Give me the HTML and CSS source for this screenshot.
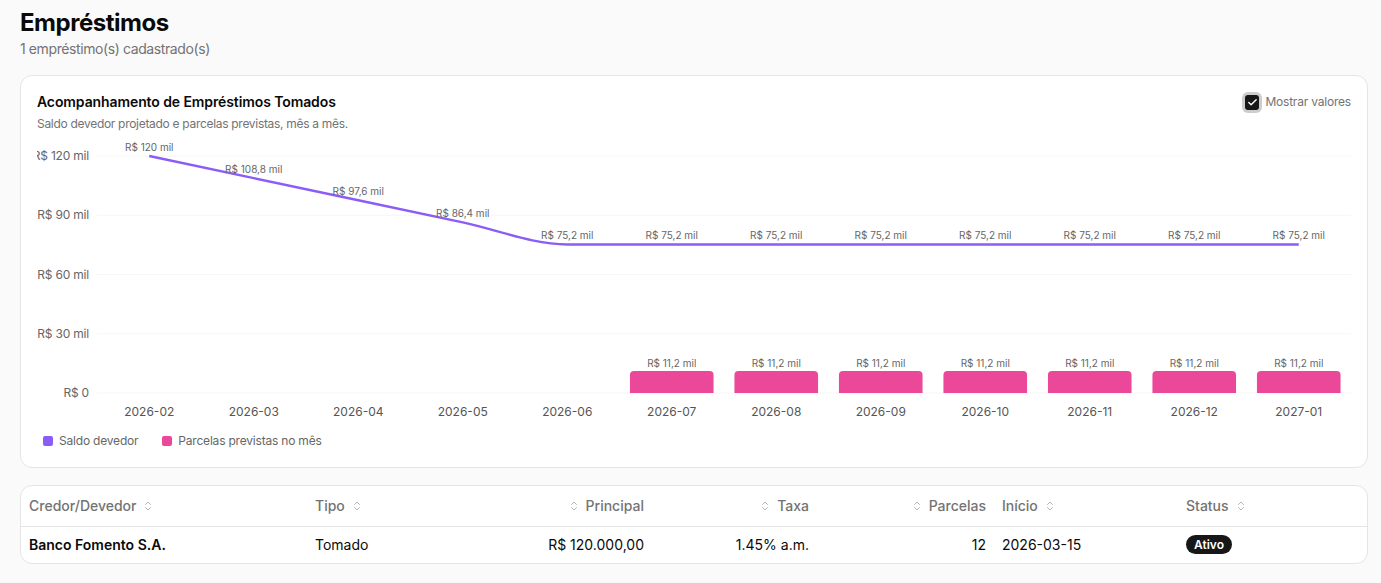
FILE: index.html
```html
<!DOCTYPE html>
<html lang="pt-BR">
<head>
    <meta charset="UTF-8">
    <meta name="viewport" content="width=device-width, initial-scale=1.0">
    <title>Empréstimos</title>
    <link rel="stylesheet" href="styles.css">
</head>
<body>
<main class="page">
    <h1>Empréstimos</h1>
    <p class="lead">1 empréstimo(s) cadastrado(s)</p>

    <section class="card chart-card">
        <div class="card-head">
            <div>
                <h2>Acompanhamento de Empréstimos Tomados</h2>
                <p class="card-sub">Saldo devedor projetado e parcelas previstas, mês a mês.</p>
            </div>
            <label class="toggle">
                <span class="box">
                    <svg viewBox="0 0 24 24" width="11" height="11"><path d="M20 6 9 17l-5-5" fill="none" stroke="#fff" stroke-width="3" stroke-linecap="round" stroke-linejoin="round"/></svg>
                </span>
                Mostrar valores
            </label>
        </div>

        <svg class="chart" width="1314" height="290" viewBox="0 0 1314 290">
            <!-- grade horizontal -->
            <g class="grid">
                <line x1="60" x2="1314" y1="20" y2="20"/>
                <line x1="60" x2="1314" y1="79.25" y2="79.25"/>
                <line x1="60" x2="1314" y1="138.5" y2="138.5"/>
                <line x1="60" x2="1314" y1="197.75" y2="197.75"/>
                <line x1="60" x2="1314" y1="257" y2="257"/>
            </g>
            <g class="y-axis">
                <text x="52" y="24">R$ 120 mil</text>
                <text x="52" y="83.25">R$ 90 mil</text>
                <text x="52" y="142.5">R$ 60 mil</text>
                <text x="52" y="201.75">R$ 30 mil</text>
                <text x="52" y="261">R$ 0</text>
            </g>
            <g class="x-axis">
                <text x="112.25" y="280">2026-02</text>
                <text x="216.75" y="280">2026-03</text>
                <text x="321.25" y="280">2026-04</text>
                <text x="425.75" y="280">2026-05</text>
                <text x="530.25" y="280">2026-06</text>
                <text x="634.75" y="280">2026-07</text>
                <text x="739.25" y="280">2026-08</text>
                <text x="843.75" y="280">2026-09</text>
                <text x="948.25" y="280">2026-10</text>
                <text x="1052.75" y="280">2026-11</text>
                <text x="1157.25" y="280">2026-12</text>
                <text x="1261.75" y="280">2027-01</text>
            </g>

            <!-- parcelas previstas -->
            <g class="bars">
                <path d="M592.95,257 V238.88 A4,4 0 0 1 596.95,234.88 H672.55 A4,4 0 0 1 676.55,238.88 V257 Z"/>
                <path d="M697.45,257 V238.88 A4,4 0 0 1 701.45,234.88 H777.05 A4,4 0 0 1 781.05,238.88 V257 Z"/>
                <path d="M801.95,257 V238.88 A4,4 0 0 1 805.95,234.88 H881.55 A4,4 0 0 1 885.55,238.88 V257 Z"/>
                <path d="M906.45,257 V238.88 A4,4 0 0 1 910.45,234.88 H986.05 A4,4 0 0 1 990.05,238.88 V257 Z"/>
                <path d="M1010.95,257 V238.88 A4,4 0 0 1 1014.95,234.88 H1090.55 A4,4 0 0 1 1094.55,238.88 V257 Z"/>
                <path d="M1115.45,257 V238.88 A4,4 0 0 1 1119.45,234.88 H1195.05 A4,4 0 0 1 1199.05,238.88 V257 Z"/>
                <path d="M1219.95,257 V238.88 A4,4 0 0 1 1223.95,234.88 H1299.55 A4,4 0 0 1 1303.55,238.88 V257 Z"/>
            </g>
            <g class="val">
                <text x="634.75" y="230.5">R$ 11,2 mil</text>
                <text x="739.25" y="230.5">R$ 11,2 mil</text>
                <text x="843.75" y="230.5">R$ 11,2 mil</text>
                <text x="948.25" y="230.5">R$ 11,2 mil</text>
                <text x="1052.75" y="230.5">R$ 11,2 mil</text>
                <text x="1157.25" y="230.5">R$ 11,2 mil</text>
                <text x="1261.75" y="230.5">R$ 11,2 mil</text>
            </g>

            <!-- saldo devedor -->
            <path class="line" d="M112.25,20 L216.75,42.12 L321.25,64.24 L425.75,86.36 C460.58,93.73 495.42,108.48 530.25,108.48 L1261.75,108.48"/>
            <g class="val">
                <text x="112.25" y="14.5">R$ 120 mil</text>
                <text x="216.75" y="36.6">R$ 108,8 mil</text>
                <text x="321.25" y="58.7">R$ 97,6 mil</text>
                <text x="425.75" y="80.9">R$ 86,4 mil</text>
                <text x="530.25" y="103">R$ 75,2 mil</text>
                <text x="634.75" y="103">R$ 75,2 mil</text>
                <text x="739.25" y="103">R$ 75,2 mil</text>
                <text x="843.75" y="103">R$ 75,2 mil</text>
                <text x="948.25" y="103">R$ 75,2 mil</text>
                <text x="1052.75" y="103">R$ 75,2 mil</text>
                <text x="1157.25" y="103">R$ 75,2 mil</text>
                <text x="1261.75" y="103">R$ 75,2 mil</text>
            </g>
        </svg>

        <ul class="legend">
            <li><span class="dot saldo"></span>Saldo devedor</li>
            <li><span class="dot parcela"></span>Parcelas previstas no mês</li>
        </ul>
    </section>

    <section class="card table-card">
        <table>
            <colgroup>
                <col style="width: 286px">
                <col style="width: 173px">
                <col style="width: 172px">
                <col style="width: 165px">
                <col style="width: 177px">
                <col style="width: 184px">
                <col style="width: 189px">
            </colgroup>
            <thead>
                <tr>
                    <th><span class="sort">Credor/Devedor <svg viewBox="0 0 24 24"><path d="m7 15 5 5 5-5M7 9l5-5 5 5"/></svg></span></th>
                    <th><span class="sort">Tipo <svg viewBox="0 0 24 24"><path d="m7 15 5 5 5-5M7 9l5-5 5 5"/></svg></span></th>
                    <th class="num"><span class="sort"><svg viewBox="0 0 24 24"><path d="m7 15 5 5 5-5M7 9l5-5 5 5"/></svg> Principal</span></th>
                    <th class="num"><span class="sort"><svg viewBox="0 0 24 24"><path d="m7 15 5 5 5-5M7 9l5-5 5 5"/></svg> Taxa</span></th>
                    <th class="num"><span class="sort"><svg viewBox="0 0 24 24"><path d="m7 15 5 5 5-5M7 9l5-5 5 5"/></svg> Parcelas</span></th>
                    <th><span class="sort">Início <svg viewBox="0 0 24 24"><path d="m7 15 5 5 5-5M7 9l5-5 5 5"/></svg></span></th>
                    <th><span class="sort">Status <svg viewBox="0 0 24 24"><path d="m7 15 5 5 5-5M7 9l5-5 5 5"/></svg></span></th>
                </tr>
            </thead>
            <tbody>
                <tr>
                    <td class="name">Banco Fomento S.A.</td>
                    <td>Tomado</td>
                    <td class="num">R$ 120.000,00</td>
                    <td class="num">1.45% a.m.</td>
                    <td class="num">12</td>
                    <td>2026-03-15</td>
                    <td><span class="badge">Ativo</span></td>
                </tr>
            </tbody>
        </table>
    </section>
</main>
</body>
</html>
```

FILE: styles.css
```css
* { box-sizing: border-box; }
body {
    margin: 0;
    background: #fafafa;
    color: #0a0a0a;
    font-family: Inter, "Noto Sans", sans-serif;
}
.page {
    width: 1348px;
    margin-left: 20px;
    padding-top: 7px;
}
h1 {
    margin: 0;
    font-size: 24px;
    line-height: 32px;
    font-weight: 700;
    letter-spacing: -0.02em;
}
.lead {
    margin: 0;
    font-size: 14px;
    line-height: 20px;
    color: #737373;
    letter-spacing: -0.4px;
}
.card {
    background: #fff;
    border: 1px solid #e5e5e5;
    border-radius: 12px;
}
.chart-card {
    margin-top: 16px;
    padding: 16px 16px 18px;
}
.card-head {
    display: flex;
    justify-content: space-between;
    align-items: flex-start;
}
h2 {
    margin: 0;
    font-size: 14px;
    line-height: 20px;
    font-weight: 600;
    letter-spacing: -0.1px;
}
.card-sub {
    margin: 4px 0 0;
    font-size: 12px;
    line-height: 16px;
    color: #737373;
    letter-spacing: -0.3px;
}
.toggle {
    display: flex;
    align-items: center;
    gap: 6px;
    font-size: 12px;
    line-height: 20px;
    color: #737373;
    letter-spacing: -0.2px;
}
.box {
    width: 14px;
    height: 15px;
    border-radius: 3px;
    background: #171717;
    box-shadow: 0 0 0 3px #cdcdcd;
    display: flex;
    align-items: center;
    justify-content: center;
}
.chart {
    display: block;
    margin-top: 4px;
    overflow: hidden;
    font-family: Inter, "Noto Sans", sans-serif;
}
.grid line { stroke: #f6f6f6; stroke-width: 1; }
.y-axis text { font-size: 12px; fill: #666; text-anchor: end; letter-spacing: -0.2px; }
.x-axis text { font-size: 12px; fill: #555; text-anchor: middle; }
.val text { font-size: 10px; fill: #666; text-anchor: middle; }
.bars path { fill: #ec4899; }
.line { fill: none; stroke: #8b5cf6; stroke-width: 2.5; }
.legend {
    list-style: none;
    margin: 7px 0 0;
    padding: 0 0 0 6px;
    display: flex;
    gap: 24px;
    font-size: 12px;
    line-height: 16px;
    color: #666;
    letter-spacing: -0.2px;
}
.legend li { display: flex; align-items: center; gap: 6px; }
.dot { width: 10px; height: 10px; border-radius: 2px; }
.saldo { background: #8b5cf6; }
.parcela { background: #ec4899; }

.table-card {
    margin-top: 17px;
    overflow: hidden;
}
table {
    width: 100%;
    border-collapse: collapse;
    table-layout: fixed;
    font-size: 14px;
}
th, td {
    padding: 0 8px;
    text-align: left;
    white-space: nowrap;
}
th {
    height: 40px;
    font-weight: 500;
    color: #737373;
    border-bottom: 1px solid #e5e5e5;
}
td { height: 37px; }
.num { text-align: right; }
.name { font-weight: 600; }
.sort {
    display: inline-flex;
    align-items: center;
    gap: 6px;
}
.sort svg {
    width: 12px;
    height: 12px;
    fill: none;
    stroke: #b5b5b5;
    stroke-width: 2;
    stroke-linecap: round;
    stroke-linejoin: round;
}
.badge {
    display: inline-block;
    background: #171717;
    color: #fff;
    font-size: 12px;
    font-weight: 600;
    line-height: 19px;
    padding: 0 8px;
    border-radius: 10px;
}
```
